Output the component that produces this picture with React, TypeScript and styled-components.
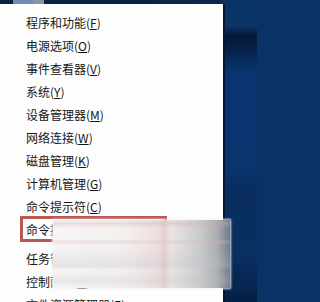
import styled, { createGlobalStyle } from "styled-components";
import { FC } from "react";

const GlobalStyle = createGlobalStyle`
  html, body {
    margin: 0;
    padding: 0;
    background: #0a3266;
  }
`;

interface Entry {
  label: string;
  key: string;
  highlighted?: boolean;
}

const groups: Entry[][] = [
  [
    { label: "程序和功能", key: "F" },
    { label: "电源选项", key: "O" },
    { label: "事件查看器", key: "V" },
    { label: "系统", key: "Y" },
    { label: "设备管理器", key: "M" },
    { label: "网络连接", key: "W" },
    { label: "磁盘管理", key: "K" },
    { label: "计算机管理", key: "G" },
    { label: "命令提示符", key: "C" },
    { label: "命令提示符(管理员)", key: "A", highlighted: true },
  ],
  [
    { label: "任务管理器", key: "T" },
    { label: "控制面板", key: "P" },
    { label: "文件资源管理器", key: "E" },
  ],
];

const MenuItem: FC<{ entry: Entry }> = ({ entry }) => (
  <Row $highlighted={entry.highlighted}>
    {entry.label}(<Key>{entry.key}</Key>)
  </Row>
);

export default function App() {
  return (
    <>
      <GlobalStyle />
      <Screen>
        <TopBar>
          <TaskIcon />
          <TaskSquare />
        </TopBar>
        <Body>
          <Menu>
            {groups.map((group, i) => (
              <Group key={i}>
                {group.map((entry) => (
                  <MenuItem key={entry.label} entry={entry} />
                ))}
              </Group>
            ))}
          </Menu>
          <Desktop />
        </Body>
        <Smear />
      </Screen>
    </>
  );
}

const Screen = styled.div`
  position: relative;
  width: 257px;
  height: 302px;
  overflow: hidden;
  display: flex;
  flex-direction: column;
  font-family: "Noto Sans CJK SC", "Noto Sans", sans-serif;
`;

const TopBar = styled.div`
  height: 4px;
  flex: none;
  display: flex;
  align-items: stretch;
  background: linear-gradient(to right, #0a2142 0, #0b2548 85%, #0b3466 87%);
`;

const TaskIcon = styled.div`
  margin-left: 13px;
  width: 20px;
  background: #6f8db3;
`;

const TaskSquare = styled.div`
  width: 11px;
  background: #8d939c;
`;

const Body = styled.div`
  flex: 1;
  display: flex;
`;

const Menu = styled.div`
  width: 223px;
  flex: none;
  background: #fdfdfd;
  padding-top: 7px;
  display: flex;
  flex-direction: column;
  gap: 6px;
`;

const Group = styled.div`
  display: flex;
  flex-direction: column;
`;

const Row = styled.div<{ $highlighted?: boolean }>`
  position: relative;
  height: 23px;
  line-height: 23px;
  padding-left: 26px;
  font-size: 12px;
  color: #161616;
  white-space: nowrap;

  ${({ $highlighted }) =>
    $highlighted &&
    `
    &::after {
      content: "";
      position: absolute;
      left: 20px;
      top: -2px;
      width: 147px;
      height: 26px;
      box-sizing: border-box;
      border: 3px solid #bb5752;
    }
  `}
`;

const Key = styled.span`
  text-decoration: underline;
  text-underline-offset: 1px;
`;

const Desktop = styled.div`
  flex: 1;
  border-left: 2px solid #051733;
  background: linear-gradient(
    to bottom,
    #0b3466 0,
    #0b3568 7%,
    #031a3c 10%,
    #041d42 13%,
    #0a3570 22%,
    #0a3670 50%,
    #082d5e 60%,
    #0a2f62 80%,
    #06234c 92%,
    #031a3a 100%
  );
`;

/* the blurred watermark streak lying over the menu */
const Smear = styled.div`
  position: absolute;
  left: 53px;
  top: 220px;
  width: 177px;
  height: 68px;
  background:
    linear-gradient(
      to bottom,
      rgba(255, 255, 255, 0) 0,
      rgba(214, 170, 170, 0.35) 5%,
      rgba(255, 255, 255, 0) 12%,
      rgba(255, 255, 255, 0) 28%,
      rgba(214, 180, 180, 0.3) 32%,
      rgba(255, 255, 255, 0) 38%,
      rgba(190, 190, 195, 0.3) 68%,
      rgba(255, 255, 255, 0) 74%,
      rgba(190, 190, 195, 0.25) 90%,
      rgba(255, 255, 255, 0) 100%
    ),
    linear-gradient(
      to right,
      #f7f5f5 0,
      #f4f0f0 40%,
      #ecdede 60%,
      #e6cfcf 63%,
      #eae4e4 66%,
      #dcdadb 74%,
      #c7c8ca 84%,
      #a9acb2 93%,
      #6f7a8c 100%
    );
  box-shadow: 0 0 2px 1px rgba(245, 243, 243, 0.9);
`;
